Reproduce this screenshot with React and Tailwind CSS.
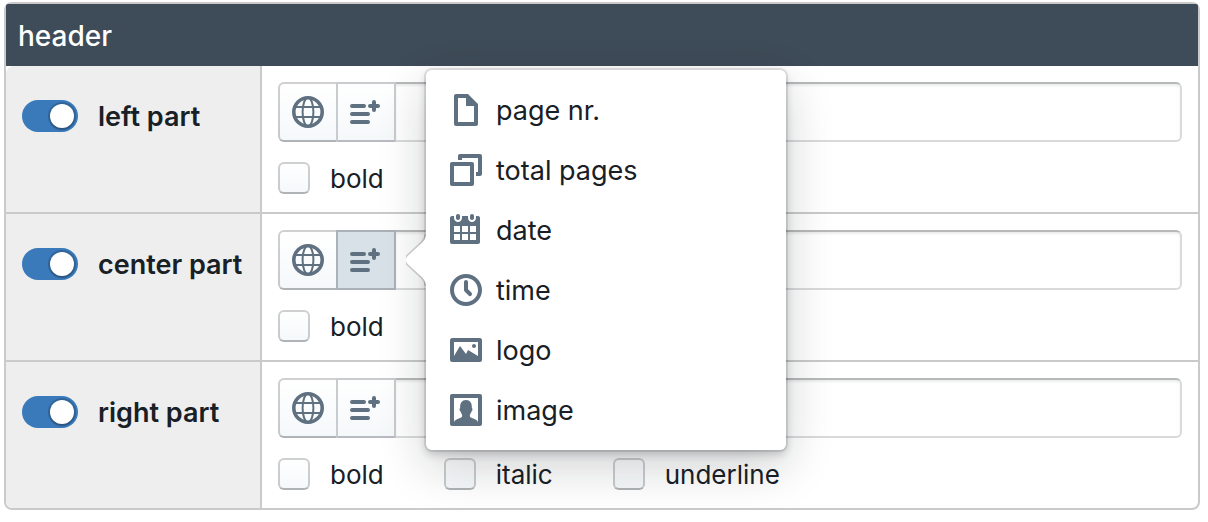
import React, { useState } from 'react';

const Icon = ({ children }) => (
  <svg width="32" height="32" viewBox="0 0 16 16" fill="currentColor" fillRule="evenodd" className="shrink-0 text-[#5f7080]" aria-hidden="true">
    {children}
  </svg>
);

const GlobeIcon = () => (
  <Icon>
    <g fill="none" stroke="currentColor">
      <circle cx="8" cy="8" r="7.1" strokeWidth="1.8" />
      <ellipse cx="8" cy="8" rx="2.7" ry="7.2" strokeWidth="1" />
      <path d="M1.5 5.5h13M1.5 10.5h13" strokeWidth="1" />
    </g>
  </Icon>
);

const InsertIcon = () => (
  <Icon>
    <g fill="none" stroke="currentColor" strokeWidth="2" strokeLinecap="round">
      <path d="M1 5h6M1 9h8M1 13h8M10 5h4M13 5h1M12 3v4" />
    </g>
  </Icon>
);

const menuItems = [
  {
    label: 'page nr.',
    path: 'M9 0H3c-.55 0-1 .45-1 1v14c0 .55.45 1 1 1h10c.55 0 1-.45 1-1V5L9 0zm3 14H4V2h4v4h4v8z',
  },
  {
    label: 'total pages',
    path: 'M15 0H5c-.55 0-1 .45-1 1v2h2V2h8v7h-1v2h2c.55 0 1-.45 1-1V1c0-.55-.45-1-1-1zM11 4H1c-.55 0-1 .45-1 1v10c0 .55.45 1 1 1h10c.55 0 1-.45 1-1V5c0-.55-.45-1-1-1zm-1 10H2V6h8v8z',
  },
  {
    label: 'date',
    path: 'M11 3c.6 0 1-.5 1-1V1c0-.6-.4-1-1-1s-1 .4-1 1v1c0 .5.4 1 1 1zm3-2h-1v1c0 1.1-.9 2-2 2s-2-.9-2-2V1H6v1c0 1.1-.9 2-2 2s-2-.9-2-2V1H1c-.6 0-1 .5-1 1v12c0 .6.4 1 1 1h13c.6 0 1-.4 1-1V2c0-.6-.5-1-1-1zM5 13H2v-3h3v3zm0-4H2V6h3v3zm4 4H6v-3h3v3zm0-4H6V6h3v3zm4 4h-3v-3h3v3zm0-4h-3V6h3v3zM4 3c.6 0 1-.5 1-1V1c0-.6-.4-1-1-1S3 .4 3 1v1c0 .5.4 1 1 1z',
  },
  {
    label: 'time',
    path: 'M8 0C3.58 0 0 3.58 0 8s3.58 8 8 8 8-3.58 8-8-3.58-8-8-8zm0 14c-3.31 0-6-2.69-6-6s2.69-6 6-6 6 2.69 6 6-2.69 6-6 6zm1-6.41V4c0-.55-.45-1-1-1s-1 .45-1 1v4c0 .28.11.53.29.71l2 2a1.003 1.003 0 001.42-1.42L9 7.59z',
  },
  {
    label: 'logo',
    path: 'M12 7c.55 0 1-.45 1-1s-.45-1-1-1-1 .45-1 1 .45 1 1 1zm3-5H1c-.5 0-1 .5-1 1v10c0 .5.5 1 1 1h14c.5 0 1-.5 1-1V3c0-.5-.5-1-1-1zm-1 9L9 8l-1 2-3-4-3 5V4h12v7z',
  },
  {
    label: 'image',
    path: 'M15 0H1C.45 0 0 .45 0 1v14c0 .55.45 1 1 1h14c.55 0 1-.45 1-1V1c0-.55-.45-1-1-1zM14 14c-.3-1-1.5-1.5-2.7-1.9-1-.35-1.4-.6-1.4-1.4 0-.5.6-.9.8-1.9.3 0 .5-.5.5-1s-.1-.8-.3-.9C11.1 4.6 10 3 8 3S4.9 4.6 5.1 6.9c-.2.1-.3.4-.3.9s.2 1 .5 1c.2 1 .8 1.4.8 1.9 0 .8-.4 1.05-1.4 1.4C3.5 12.5 2.3 13 2 14V2h12v12z',
  },
];

const InsertMenu = () => (
  <div className="absolute left-full top-1/2 z-10 ml-[30px] w-[360px] -translate-y-1/2 rounded-md bg-white py-2.5 shadow-[0_0_0_2px_rgba(16,22,26,0.1),0_4px_8px_rgba(16,22,26,0.2),0_16px_48px_rgba(16,22,26,0.2)]">
    {/* Arrow towards the button */}
    <svg width="60" height="60" viewBox="0 0 30 30" className="absolute right-full top-1/2 -mr-10 -translate-y-1/2" aria-hidden="true">
      <path
        d="M8.11 6.302c1.015-.936 1.887-2.922 1.887-4.297v26c0-1.378-.868-3.357-1.888-4.297L.925 17.09c-1.237-1.14-1.233-3.034 0-4.17L8.11 6.302z"
        fill="none"
        stroke="#10161a"
        strokeOpacity="0.2"
        strokeWidth="1.6"
      />
      <path
        d="M8.11 6.302c1.015-.936 1.887-2.922 1.887-4.297v26c0-1.378-.868-3.357-1.888-4.297L.925 17.09c-1.237-1.14-1.233-3.034 0-4.17L8.11 6.302zM9.9 0H14v30H9.9z"
        fill="#ffffff"
        fillRule="nonzero"
      />
    </svg>
    <ul className="relative text-[27px]">
      {menuItems.map((item) => (
        <li key={item.label}>
          <button type="button" className="flex h-[60px] w-full items-center gap-3.5 px-6 text-left">
            <Icon>
              <path d={item.path} />
            </Icon>
            <span className="pt-0.5">{item.label}</span>
          </button>
        </li>
      ))}
    </ul>
  </div>
);

const Check = ({ label }) => (
  <label className="flex h-8 items-center gap-5">
    <input
      type="checkbox"
      className="size-8 appearance-none rounded-md border-2 border-[#10161a]/20 border-b-[#10161a]/30 bg-linear-to-b from-white to-[#f5f8fa] bg-origin-border checked:bg-[#3a7aba]"
    />
    <span className="pt-0.5">{label}</span>
  </label>
);

const PartRow = ({ name, styles, menuOpen, onToggleMenu }) => {
  const [enabled, setEnabled] = useState(true);

  return (
    <div className="group flex border-t-2 border-[#cacaca] first:border-t-0">
      <div className="w-64 shrink-0 border-r-2 border-[#cacaca] bg-[#eeeeee] px-4 pt-[34px] group-first:rounded-tl-lg group-last:rounded-bl-md">
        <label className="flex h-8 items-center gap-5 text-[27px] font-semibold whitespace-nowrap">
          <input
            type="checkbox"
            role="switch"
            checked={enabled}
            onChange={() => setEnabled(!enabled)}
            className="flex h-8 w-14 shrink-0 appearance-none items-center rounded-full bg-[#8a9ba8] p-1 before:size-6 before:rounded-full before:bg-white before:shadow-[0_0_0_2px_rgba(16,22,26,0.2),0_2px_2px_rgba(16,22,26,0.2)] checked:justify-end checked:bg-[#3a7aba]"
          />
          <span className="pt-0.5">{name}</span>
        </label>
      </div>

      <div className="min-w-0 flex-1 px-4 pt-4 pb-[18px]">
        <div className="flex">
          <button
            type="button"
            aria-label="Language"
            className="flex h-[60px] w-[60px] shrink-0 items-center justify-center rounded-l-md border-2 border-[#10161a]/20 border-b-[#10161a]/30 bg-linear-to-b from-white to-[#f5f8fa] bg-origin-border"
          >
            <GlobeIcon />
          </button>
          <div className="relative shrink-0">
            <button
              type="button"
              aria-label="Insert"
              aria-expanded={menuOpen}
              onClick={onToggleMenu}
              className={
                menuOpen
                  ? '-ml-0.5 flex h-[60px] w-[60px] items-center border-2 border-[#aab1b9] bg-[#d8e0e8] pl-3'
                  : '-ml-0.5 flex h-[60px] w-[60px] items-center border-2 border-[#c9cccf] border-b-[#b8bcc0] bg-linear-to-b from-white to-[#f5f8fa] bg-origin-border pl-3'
              }
            >
              <InsertIcon />
            </button>
            {menuOpen && <InsertMenu />}
          </div>
          <input
            type="text"
            aria-label={name}
            className="h-[60px] min-w-0 flex-1 rounded-r-md border-y-2 border-r-2 border-[#d9dadb] border-t-[#b7b8b9] px-5 shadow-[inset_0_2px_2px_rgba(16,22,26,0.08)] outline-none"
          />
        </div>

        <div className="mt-5 flex gap-[60px]">
          {styles.map((style) => (
            <Check key={style} label={style} />
          ))}
        </div>
      </div>
    </div>
  );
};

const parts = [
  { name: 'left part', styles: ['bold'] },
  { name: 'center part', styles: ['bold'] },
  { name: 'right part', styles: ['bold', 'italic', 'underline'] },
];

const App = () => {
  const [openPart, setOpenPart] = useState('center part');

  return (
    <div className="bg-white pt-0.5 pr-2 pb-3 pl-1 font-['Inter',sans-serif] text-[26px] leading-8 text-[#182026]">
      <section className="rounded-lg border-2 border-[#cacaca]">
        {/* Title */}
        <h2 className="rounded-t-xs bg-[#3e4b58] px-3 pt-4 pb-3.5 text-[28px] leading-8 font-medium text-white">header</h2>

        {/* Parts */}
        <div>
          {parts.map((part) => (
            <PartRow
              key={part.name}
              name={part.name}
              styles={part.styles}
              menuOpen={openPart === part.name}
              onToggleMenu={() => setOpenPart(openPart === part.name ? null : part.name)}
            />
          ))}
        </div>
      </section>
    </div>
  );
};

export default App;
